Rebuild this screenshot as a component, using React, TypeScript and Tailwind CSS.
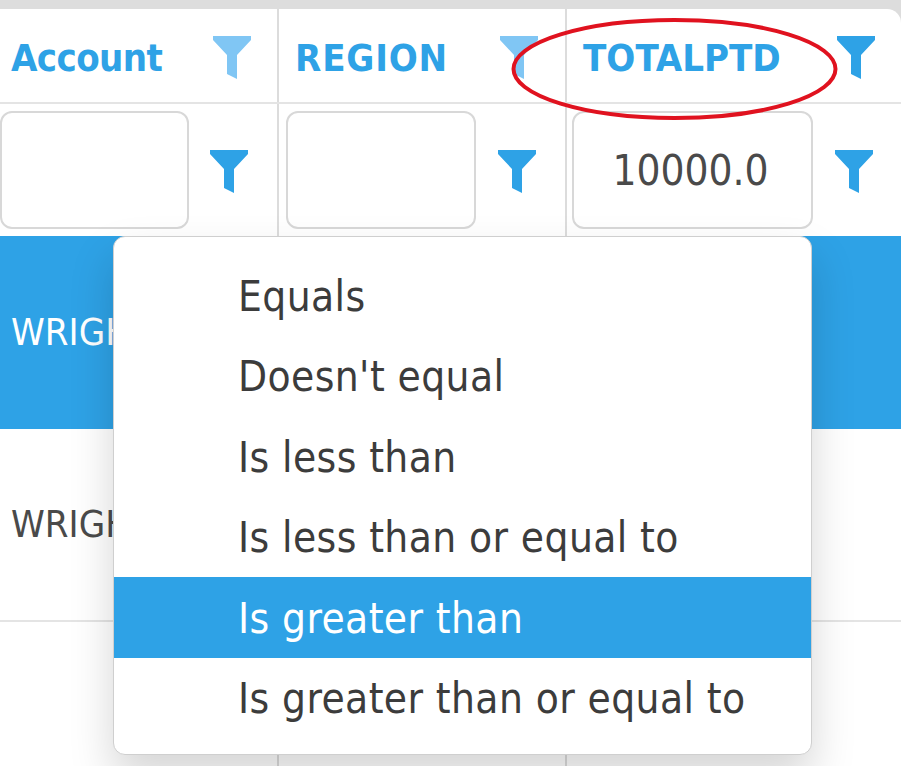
const font = { fontFamily: '"DejaVu Sans Condensed", "DejaVu Sans", sans-serif' };

function Funnel({ light = false }: { light?: boolean }) {
  return (
    <svg width="38" height="43" viewBox="0 0 38 43" className="block shrink-0">
      <path d="M0 0H38V4L24 19V43L14 38V19L0 4Z" fill={light ? "#80c6f4" : "#2ea2e6"} />
    </svg>
  );
}

const options = [
  "Equals",
  "Doesn't equal",
  "Is less than",
  "Is less than or equal to",
  "Is greater than",
  "Is greater than or equal to",
];

function HeaderCell({ title, light, cls, iconCls, titleCls }: { title: string; light?: boolean; cls: string; iconCls: string; titleCls?: string }) {
  return (
    <div className={`flex items-start h-full ${cls}`}>
      <span className={`text-[38px] leading-[50px] mt-[24px] font-bold text-[#2ea2e6] ${titleCls ?? ""}`}>{title}</span>
      <span className={`mt-[27px] ml-auto ${iconCls}`}>
        <Funnel light={light} />
      </span>
    </div>
  );
}

function FilterCell({ value, inputCls, iconCls }: { value?: string; inputCls: string; iconCls: string }) {
  return (
    <div className="flex items-start h-full pt-[7px]">
      <div
        className={`h-[118px] border-2 border-[#d8d8d8] rounded-[12px] bg-white flex items-center justify-center text-[42px] text-[#4a4a4a] ${inputCls}`}
      >
        {value}
      </div>
      <span className={`mt-[39px] ${iconCls}`}>
        <Funnel />
      </span>
    </div>
  );
}

export default function App() {
  return (
    <div className="relative w-[901px] h-[766px] overflow-hidden bg-[#dddddd] pt-[9px]" style={font}>
      <div className="h-full bg-white rounded-tr-[14px] overflow-hidden">
        <div className="grid grid-cols-[279px_288px_1fr] h-[95px] border-b-2 border-[#e4e4e4]">
          <div className="border-r-2 border-[#dcdcdc] h-full">
            <HeaderCell title="Account" light cls="pl-[11px]" iconCls="mr-[26px]" titleCls="tracking-[-0.6px]" />
          </div>
          <div className="border-r-2 border-[#dcdcdc] h-full">
            <HeaderCell title="REGION" light cls="pl-[16px]" iconCls="mr-[27px]" titleCls="tracking-[0.8px]" />
          </div>
          <HeaderCell title="TOTALPTD" cls="pl-[16px]" iconCls="mr-[26px]" />
        </div>
        <div className="grid grid-cols-[279px_288px_1fr] h-[132px]">
          <div className="border-r-2 border-[#dcdcdc] h-full">
            <FilterCell inputCls="w-[189px]" iconCls="ml-[21px]" />
          </div>
          <div className="border-r-2 border-[#dcdcdc] h-full pl-[7px]">
            <FilterCell inputCls="w-[190px]" iconCls="ml-[22px]" />
          </div>
          <div className="h-full pl-[5px]">
            <FilterCell value="10000.0" inputCls="w-[241px] pr-[4px]" iconCls="ml-[22px]" />
          </div>
        </div>
        <div className="h-[193px] bg-[#2ea2e6] flex items-center pl-[11px] text-[38px] text-white">WRIGHT</div>
        <div className="h-[193px] border-b-2 border-[#e4e4e4] flex items-center pl-[11px] text-[38px] text-[#4a4a4a]">
          WRIGHT
        </div>
        <div className="grid grid-cols-[279px_288px_1fr] h-[150px]">
          <div className="border-r-2 border-[#dcdcdc]" />
          <div className="border-r-2 border-[#dcdcdc]" />
          <div />
        </div>
      </div>

      <div className="absolute left-[113px] top-[236px] w-[699px] h-[519px] pt-[18px] bg-white border border-[#cfcfcf] rounded-[12px] shadow-[0_22px_44px_rgba(0,0,0,0.17)] overflow-hidden">
        {options.map((o) => (
          <div
            key={o}
            className={`h-[80.5px] pl-[124px] pt-[2px] flex items-center text-[42px] tracking-[0.4px] whitespace-nowrap ${
              o === "Is greater than" ? "bg-[#2ea2e6] text-white" : "text-[#3c3c3c]"
            }`}
          >
            {o}
          </div>
        ))}
      </div>

      <svg width="901" height="130" className="absolute left-0 top-0 pointer-events-none">
        <ellipse cx="674.5" cy="69" rx="161" ry="49" fill="none" stroke="#e0121f" strokeWidth="4" />
      </svg>
    </div>
  );
}
